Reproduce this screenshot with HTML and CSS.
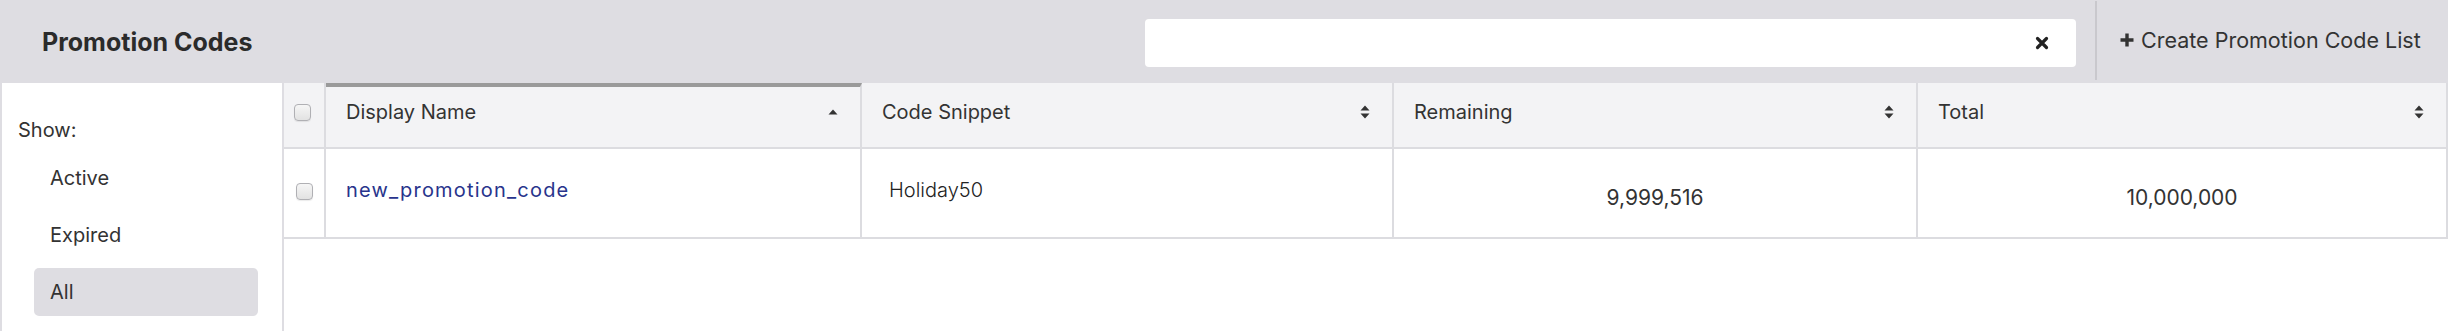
FILE: index.html
```html
<!DOCTYPE html>
<html lang="en">
<head>
<meta charset="utf-8">
<title>Promotion Codes</title>
<link rel="stylesheet" href="styles.css">
</head>
<body>
<div class="page">
  <header class="topbar">
    <h1 class="title">Promotion Codes</h1>
    <div class="search">
      <input class="search-input" type="text" aria-label="Search">
      <span class="search-clear">
        <svg width="14" height="14" viewBox="0 0 14 14"><path d="M2.5 2.5 L11.5 11.5 M11.5 2.5 L2.5 11.5" stroke="#222" stroke-width="3.2" stroke-linecap="round"/></svg>
      </span>
    </div>
    <div class="divider"></div>
    <div class="create-wrap">
      <button class="create-btn"><svg class="plus" width="16" height="16" viewBox="0 0 16 16"><path d="M8 1.5 V14.5 M1.5 8 H14.5" stroke="#333" stroke-width="3.4"/></svg>Create Promotion Code List</button>
    </div>
  </header>
  <div class="main">
    <aside class="sidebar">
      <div class="show-label">Show:</div>
      <ul class="filters">
        <li class="filter">Active</li>
        <li class="filter">Expired</li>
        <li class="filter selected">All</li>
      </ul>
    </aside>
    <section class="table">
      <div class="cell head chk"><span class="checkbox"></span></div>
      <div class="cell head sorted">Display Name
        <svg class="sort" width="10" height="6" viewBox="0 0 10 6"><path d="M5 0.5 L9.5 5.5 H0.5 Z" fill="#333"/></svg>
      </div>
      <div class="cell head">Code Snippet
        <svg class="sort" width="10" height="14" viewBox="0 0 10 14"><path d="M5 0.5 L9.5 5.5 H0.5 Z M5 13.5 L9.5 8.5 H0.5 Z" fill="#333"/></svg>
      </div>
      <div class="cell head">Remaining
        <svg class="sort" width="10" height="14" viewBox="0 0 10 14"><path d="M5 0.5 L9.5 5.5 H0.5 Z M5 13.5 L9.5 8.5 H0.5 Z" fill="#333"/></svg>
      </div>
      <div class="cell head last">Total
        <svg class="sort" width="10" height="14" viewBox="0 0 10 14"><path d="M5 0.5 L9.5 5.5 H0.5 Z M5 13.5 L9.5 8.5 H0.5 Z" fill="#333"/></svg>
      </div>

      <div class="cell row chk"><span class="checkbox row-box"></span></div>
      <div class="cell row"><a class="link" href="#">new_promotion_code</a></div>
      <div class="cell row snippet">Holiday50</div>
      <div class="cell row num">9,999,516</div>
      <div class="cell row num last">10,000,000</div>
    </section>
  </div>
</div>
</body>
</html>
```
FILE: styles.css
```css
* { box-sizing: border-box; }
html, body { margin: 0; padding: 0; background: #fff; }
body {
  font-family: Inter, Lato, "Liberation Sans", sans-serif;
  font-variant-ligatures: none;
  color: #333;
  font-size: 20px;
}
.page { width: 2448px; height: 331px; overflow: hidden; }

.topbar {
  height: 83px;
  background: #dedde2;
  display: flex;
  align-items: center;
}
.title {
  flex: 1;
  margin: 0;
  padding-left: 42px;
  font-size: 25px;
  font-weight: 700;
  color: #2b2b2b;
}
.search {
  position: relative;
  flex: none;
  width: 931px;
  height: 48px;
  margin-right: 19px;
  margin-top: 2px;
}
.search-input {
  width: 100%;
  height: 100%;
  border: none;
  border-radius: 4px;
  background: #fff;
  outline: none;
}
.search-clear {
  position: absolute;
  right: 27px;
  top: 17px;
  width: 14px;
  height: 14px;
  display: flex;
}
.divider {
  flex: none;
  align-self: stretch;
  width: 2px;
  margin: 1px 0 3px;
  background: #c9c8cd;
}
.create-wrap {
  flex: none;
  width: 351px;
  padding-left: 22px;
}
.create-btn {
  display: flex;
  align-items: center;
  gap: 6px;
  padding: 0 0 4px 0;
  border: none;
  background: transparent;
  font-family: inherit;
  font-size: 21.5px;
  color: #333;
  white-space: nowrap;
}
.plus { flex: none; }

.main {
  display: flex;
  height: 248px;
}
.sidebar {
  flex: none;
  width: 284px;
  border-left: 2px solid #dedde2;
  border-right: 2px solid #dedde2;
  padding: 35px 0 0 16px;
}
.show-label { line-height: 24px; }
.filters {
  list-style: none;
  margin: 12px 0 0 16px;
  padding: 0;
  display: flex;
  flex-direction: column;
  gap: 9px;
}
.filter {
  width: 224px;
  height: 48px;
  padding-left: 16px;
  display: flex;
  align-items: center;
  border-radius: 5px;
}
.filter.selected { background: #dedde2; }

.table {
  flex: 1;
  display: grid;
  grid-template-columns: 42px 536px 532px 524px 530px;
  grid-template-rows: 66px 90px;
  align-content: start;
}
.cell {
  border-right: 2px solid #dcdce0;
  border-bottom: 2px solid #dcdce0;
  display: flex;
  align-items: center;
  padding: 0 22px 0 20px;
}
.head {
  background: #f3f3f5;
  justify-content: space-between;
  padding-bottom: 6px;
}
.head.sorted { border-top: 4px solid #9a9a9a; padding-bottom: 10px; }
.chk { padding: 0; justify-content: center; }
.head.chk { padding-bottom: 6px; padding-right: 4px; }
.row.chk { padding-bottom: 4px; }
.checkbox {
  width: 17px;
  height: 17px;
  border: 1.5px solid #b0b0b4;
  border-radius: 4px;
  background: linear-gradient(#f6f6f6, #e2e2e2);
  box-shadow: 0 1px 1px rgba(0,0,0,0.08);
}
.sort { flex: none; }
.row { padding-bottom: 6px; }
.link {
  color: #28348c;
  text-decoration: none;
  letter-spacing: 1.2px;
}
.snippet {
  padding-left: 27px;
  font-weight: 300;
  color: #222;
}
.num {
  justify-content: center;
  padding: 8px 0 0 0;
  font-size: 21px;
}
```
